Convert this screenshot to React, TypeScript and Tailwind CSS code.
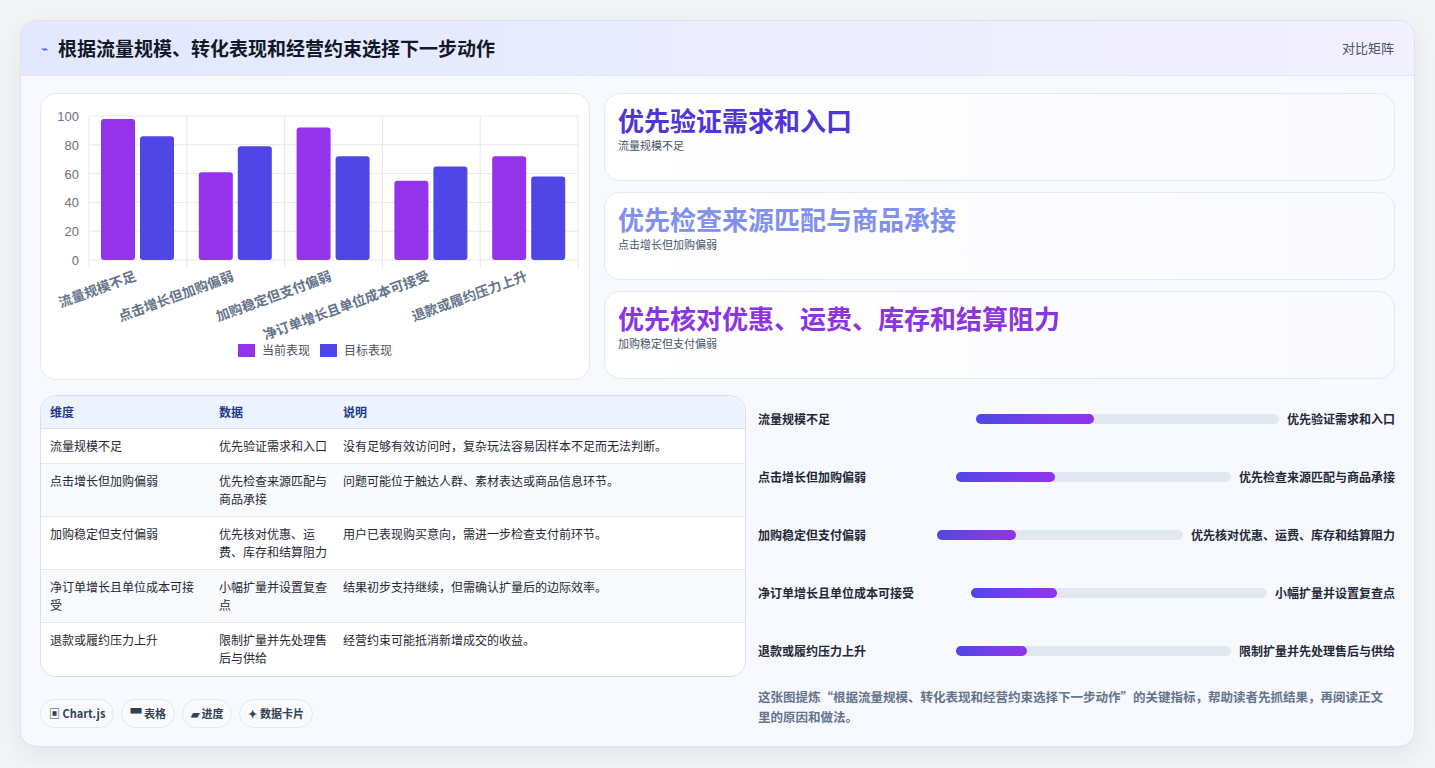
import React from "react";

const F = { fontFamily: '"Noto Sans CJK SC","Noto Sans",sans-serif' };
const cats = ["流量规模不足", "点击增长但加购偏弱", "加购稳定但支付偏弱", "净订单增长且单位成本可接受", "退款或履约压力上升"];
const cur = [98, 61, 92, 55, 72];
const tgt = [86, 79, 72, 65, 58];
const acts = ["优先验证需求和入口", "优先检查来源匹配与商品承接", "优先核对优惠、运费、库存和结算阻力", "小幅扩量并设置复查点", "限制扩量并先处理售后与供给"];
const notes = ["没有足够有效访问时，复杂玩法容易因样本不足而无法判断。", "问题可能位于触达人群、素材表达或商品信息环节。", "用户已表现购买意向，需进一步检查支付前环节。", "结果初步支持继续，但需确认扩量后的边际效率。", "经营约束可能抵消新增成交的收益。"];
const bars = [{ w: 303, p: 39 }, { w: 275, p: 36 }, { w: 246, p: 32 }, { w: 296, p: 29 }, { w: 275, p: 26 }];

function Chart() {
  const x0 = 48, x1 = 537, yb = 166, yt = 22;
  const cw = (x1 - x0) / 5;
  const y = (v: number) => yb - ((yb - yt) * v) / 100;
  return (
    <svg width="549" height="286" className="block">
      {[0, 20, 40, 60, 80, 100].map((v) => (
        <g key={v}>
          <line x1={x0} x2={x1} y1={y(v)} y2={y(v)} stroke="#e5e7eb" />
          <text x={x0 - 10} y={y(v) + 5} textAnchor="end" fontSize="13" fill="#6b7280" fontFamily="Liberation Sans, sans-serif">{v}</text>
        </g>
      ))}
      {[0, 1, 2, 3, 4, 5].map((i) => (
        <line key={i} x1={x0 + i * cw} x2={x0 + i * cw} y1={yt} y2={yb + 8} stroke="#e5e7eb" />
      ))}
      {cats.map((c, i) => {
        const bx = x0 + i * cw + 12;
        return (
          <g key={c}>
            <rect x={bx} y={y(cur[i])} width="34" height={yb - y(cur[i])} rx="3" fill="#9333ea" />
            <rect x={bx + 39} y={y(tgt[i])} width="34" height={yb - y(tgt[i])} rx="3" fill="#4f46e5" />
            <text transform={`translate(${x0 + i * cw + cw / 2 - 1},${yb + 20}) rotate(-20)`} textAnchor="end" fontSize="13.5" fontWeight="700" fill="#64748b" style={F}>{c}</text>
          </g>
        );
      })}
      <rect x="197" y="250" width="17" height="13" fill="#9333ea" />
      <text x="221" y="261" fontSize="12" fill="#4b5563" style={F}>当前表现</text>
      <rect x="279" y="250" width="17" height="13" fill="#4f46e5" />
      <text x="303" y="261" fontSize="12" fill="#4b5563" style={F}>目标表现</text>
    </svg>
  );
}

export default function App() {
  return (
    <div className="min-h-[768px] bg-[#f3f4f6] p-[20px]" style={F}>
      <div className="w-[1395px] h-[727px] rounded-2xl border border-[#dbe2f5] bg-[#f7f9ff] overflow-hidden shadow-[0_8px_24px_rgba(30,41,59,0.08)] flex flex-col">
        <div className="h-[55px] shrink-0 flex items-center justify-between px-[20px] bg-gradient-to-r from-[#e2e8ff] to-[#f3f0ff] border-b border-[#e3e8f7]">
          <div className="flex items-center gap-[10px]">
            <span className="text-[#3b5bdb] text-[12px]">⌁</span>
            <span className="text-[19px] font-bold text-[#111827]">根据流量规模、转化表现和经营约束选择下一步动作</span>
          </div>
          <span className="text-[13px] text-[#475569]">对比矩阵</span>
        </div>
        <div className="flex-1 px-[19px] pt-[17px] flex flex-col gap-[15px]">
          <div className="flex gap-[14px]">
            <div className="w-[550px] h-[287px] shrink-0 rounded-2xl border border-[#e3e8f3] bg-white">
              <Chart />
            </div>
            <div className="flex-1 flex flex-col gap-[11px]">
              {[
                ["优先验证需求和入口", "流量规模不足", "text-[#4f35d8]"],
                ["优先检查来源匹配与商品承接", "点击增长但加购偏弱", "text-[#8190ee]"],
                ["优先核对优惠、运费、库存和结算阻力", "加购稳定但支付偏弱", "text-[#8b34e0]"],
              ].map(([t, s, c]) => (
                <div key={t} className="h-[88px] rounded-2xl border border-[#e3e8f3] bg-gradient-to-r from-white to-[#f9faff] px-[13px] pt-[7px]">
                  <div className={`text-[26px] leading-[38px] font-bold ${c}`}>{t}</div>
                  <div className="text-[11px] text-[#475569] mt-[-2px]">{s}</div>
                </div>
              ))}
            </div>
          </div>
          <div className="flex gap-[12px]">
            <div className="w-[706px] shrink-0">
              <div className="rounded-2xl border border-[#d8deea] overflow-hidden bg-white">
                <div className="flex h-[33px] items-center bg-[#eef4ff] border-b border-[#d8deea] text-[12px] font-bold text-[#1e3a8a]">
                  <div className="w-[169px] pl-[9px]">维度</div>
                  <div className="w-[124px] pl-[9px]">数据</div>
                  <div className="pl-[9px]">说明</div>
                </div>
                {cats.map((c, i) => (
                  <div key={c} className={`flex text-[12px] leading-[18px] text-[#1f2937] py-[8px] ${i % 2 ? "bg-[#f8fafc]" : "bg-white"} ${i < 4 ? "border-b border-[#e5e7eb]" : ""} ${i === 0 ? "h-[35px]" : "h-[53px]"}`}>
                    <div className="w-[169px] pl-[9px] pr-[6px]">{c}</div>
                    <div className="w-[124px] pl-[9px] pr-[4px]">{acts[i]}</div>
                    <div className="flex-1 pl-[9px]">{notes[i]}</div>
                  </div>
                ))}
              </div>
              <div className="flex gap-[7px] mt-[22px]">
                {["▣ Chart.js", "▀ 表格", "▰ 进度", "✦ 数据卡片"].map((t) => (
                  <span key={t} className="h-[29px] px-[8px] flex items-center rounded-full border border-[#e2e8f0] bg-[#f8fafc] text-[11px] font-bold text-[#334155]">{t}</span>
                ))}
              </div>
            </div>
            <div className="flex-1 flex flex-col">
              <div className="flex flex-col gap-[41px] pt-[15px]">
                {cats.map((c, i) => (
                  <div key={c} className="flex items-center h-[17px] text-[12px] font-bold text-[#1f2937]">
                    <span className="shrink-0">{c}</span>
                    <div className="flex-1 flex items-center justify-end gap-[8px]">
                      <div className="h-[10px] rounded-full bg-[#e2e8f0]" style={{ width: bars[i].w }}>
                        <div className="h-full rounded-full bg-gradient-to-r from-[#4f46e5] to-[#9333ea]" style={{ width: bars[i].p + "%" }} />
                      </div>
                      <span>{acts[i]}</span>
                    </div>
                  </div>
                ))}
              </div>
              <p className="mt-[28px] pr-[4px] text-[12.5px] leading-[20px] font-bold text-[#64748b]">这张图提炼“根据流量规模、转化表现和经营约束选择下一步动作”的关键指标，帮助读者先抓结果，再阅读正文里的原因和做法。</p>
            </div>
          </div>
        </div>
      </div>
    </div>
  );
}
